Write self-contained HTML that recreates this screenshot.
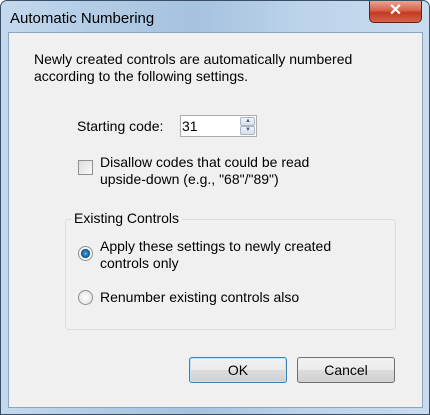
<!DOCTYPE html>
<html><head><style>
*{box-sizing:border-box;margin:0;padding:0}
body{width:430px;height:415px;overflow:hidden;background:#fff;font-family:"Liberation Sans",sans-serif;font-size:14px;color:#000}
.win{position:absolute;left:0;top:0;width:430px;height:415px;border:1px solid #3a4f66;border-radius:7px 7px 0 0;background:linear-gradient(90deg,#c4d9ee 0%,#b4cde6 20%,#a5c2df 45%,#bcd3ea 70%,#c9dcef 100%)}
.title{position:absolute;left:9px;top:9px;font-size:15px;color:#000}
.close{position:absolute;left:368px;top:0;width:53px;height:22px;border:1px solid #5b2418;border-top:none;border-radius:0 0 5px 5px;background:linear-gradient(#e8a493 0%,#d8604a 45%,#c23a22 55%,#d5634a 100%);color:#fff;text-align:center;font-weight:bold;font-size:16px;line-height:20px}
.client{position:absolute;left:8px;top:32px;width:415px;height:376px;background:#f0f0f0;border:1px solid #8ea4bc}
.t{position:absolute;white-space:nowrap;line-height:17px}
.spin{position:absolute;left:180px;top:115px;width:77px;height:22px;border:1px solid #abadb3;background:#fff}
.sb{position:absolute;right:1px;width:15px;height:9px;border:1px solid #a9b6c8;background:linear-gradient(#f2f5fa,#d6dfea);border-radius:2px}
.cb{position:absolute;left:78px;top:160px;width:15px;height:15px;border:1px solid #8f8f8f;background:linear-gradient(135deg,#dcdcdc,#fafafa)}
.grp{position:absolute;left:65px;top:219px;width:331px;height:111px;border:1px solid #d5dfe5;border-radius:3px}
.rad{position:absolute;width:15px;height:15px;border-radius:50%;border:1px solid #8f8f8f;background:radial-gradient(#fff,#ddd)}
.btn{position:absolute;top:357px;width:98px;height:26px;border:1px solid #707070;border-radius:3px;background:linear-gradient(#f2f2f2 0%,#ebebeb 50%,#dddddd 51%,#cfcfcf 100%);text-align:center;line-height:24px}
</style></head><body>
<div class="win">
<div class="title">Automatic Numbering</div>
<div class="close">✕</div>
</div>
<div class="client"></div>
<div class="t" style="left:34px;top:51px">Newly created controls are automatically numbered</div>
<div class="t" style="left:34px;top:68px">according to the following settings.</div>
<div class="t" style="left:77px;top:118px">Starting code:</div>
<div class="spin"><span style="position:absolute;left:1px;top:2px;line-height:17px">31</span>
<div class="sb" style="top:1px"></div><div class="sb" style="top:10px"></div>
<span style="position:absolute;right:5px;top:2px;font-size:6px;color:#4d6185">▲</span>
<span style="position:absolute;right:5px;top:11px;font-size:6px;color:#4d6185">▼</span></div>
<div class="cb"></div>
<div class="t" style="left:100px;top:154px">Disallow codes that could be read</div>
<div class="t" style="left:100px;top:171px">upside-down (e.g., "68"/"89")</div>
<div class="grp"></div>
<div class="t" style="left:71px;top:210px;background:#f0f0f0;padding:0 3px">Existing Controls</div>
<div class="rad" style="left:78px;top:246px;background:radial-gradient(#4ab8ee 0%,#0d4f86 45%,#fff 55%,#ddd 100%)"></div>
<div class="t" style="left:100px;top:238px">Apply these settings to newly created</div>
<div class="t" style="left:100px;top:255px">controls only</div>
<div class="rad" style="left:78px;top:290px"></div>
<div class="t" style="left:100px;top:289px">Renumber existing controls also</div>
<div class="btn" style="left:189px;border-color:#3c7fb1;box-shadow:inset 0 0 0 1px #bde6fd">OK</div>
<div class="btn" style="left:297px">Cancel</div>
</body></html>
